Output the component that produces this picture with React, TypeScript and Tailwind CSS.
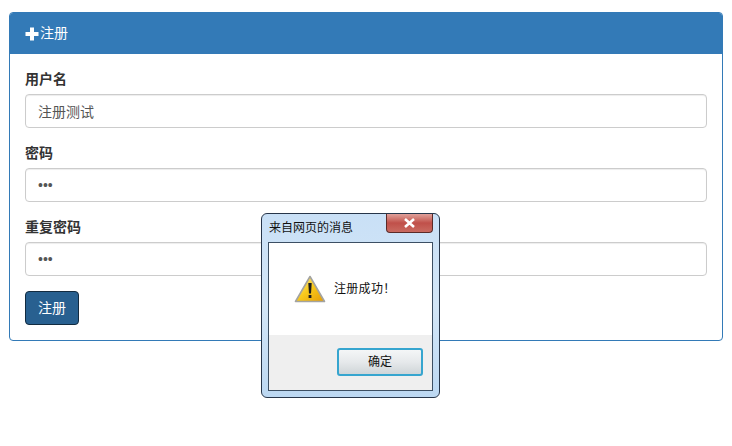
const font = "[font-family:'Liberation_Sans','Noto_Sans_CJK_SC',sans-serif]"

const fields = [
  { label: '用户名', value: '注册测试', type: 'text' },
  { label: '密码', value: '123', type: 'password' },
  { label: '重复密码', value: '123', type: 'password' },
]

function WarningIcon() {
  return (
    <svg width="32" height="28" viewBox="0 0 32 28">
      <defs>
        <linearGradient id="warn" x1="0" y1="0" x2="1" y2="1">
          <stop offset="0" stopColor="#fff2a0" />
          <stop offset="0.5" stopColor="#f8c91c" />
          <stop offset="1" stopColor="#e59b05" />
        </linearGradient>
      </defs>
      <path d="M16 1.5 L30.5 26.5 L1.5 26.5 Z" fill="url(#warn)" stroke="#a3a3a0" strokeWidth="1.6" strokeLinejoin="round" />
      <path d="M14.3 8 L17.7 8 L17 18.5 L15 18.5 Z" fill="#1c1c1c" />
      <rect x="14.6" y="20" width="2.8" height="3" fill="#1c1c1c" />
    </svg>
  )
}

function MessageBox() {
  return (
    <div className="absolute left-[261px] top-[213px] flex h-[185px] w-[179px] flex-col rounded-[6px] border border-[#27364a] bg-gradient-to-b from-[#c9e0f6] via-[#d3e6f7] to-[#bcd8f2] px-[6px] pb-[6px]">
      <div className="flex h-[28px] shrink-0 items-start justify-between">
        <span className="pt-[5px] pl-[1px] text-[12px] leading-[18px] text-[#111]">来自网页的消息</span>
        <div className="mr-[0px] flex h-[19px] w-[47px] items-center justify-center rounded-b-[4px] border border-t-0 border-[#5a2a28] bg-gradient-to-b from-[#dfa09a] via-[#c0504a] to-[#c96a60]">
          <svg width="13" height="10" viewBox="0 0 13 10">
            <path d="M2 1 L11 9 M11 1 L2 9" stroke="#fff" strokeWidth="2.6" />
          </svg>
        </div>
      </div>
      <div className="flex flex-1 flex-col border border-[#3c4f63] bg-white">
        <div className="flex h-[92px] items-center pb-[1px] pl-[25px]">
          <WarningIcon />
          <span className="ml-[8px] text-[12px] tracking-[0.3px] text-[#111]">注册成功！</span>
        </div>
        <div className="flex flex-1 items-start justify-end bg-[#efefef] pt-[13px] pr-[9px]">
          <button className="h-[28px] w-[86px] rounded-[3px] border-2 border-[#36a5cf] bg-gradient-to-b from-[#f4f6f7] via-[#e6e9eb] to-[#cfd5d8] text-[12px] text-[#111]">
            确定
          </button>
        </div>
      </div>
    </div>
  )
}

export default function App() {
  return (
    <div className={`relative h-[446px] w-[732px] overflow-hidden bg-white pt-[12px] pl-[9px] ${font}`}>
      <div className="w-[714px] rounded-[4px] border border-[#337ab7] bg-white">
        <div className="flex h-[41px] items-center rounded-t-[3px] bg-[#337ab7] px-[15px] text-[14px] text-white">
          <svg width="14" height="14" viewBox="0 0 14 14" className="mr-[1px]">
            <path d="M5 0.5 H9 V5 H13.5 V9 H9 V13.5 H5 V9 H0.5 V5 H5 Z" fill="#fff" />
          </svg>
          注册
        </div>
        <div className="p-[15px]">
          {fields.map(field => (
            <div key={field.label} className="mb-[15px]">
              <label className="mb-[5px] block text-[14px] leading-[20px] font-bold text-[#333]">{field.label}</label>
              <input
                type={field.type}
                defaultValue={field.value}
                className="block h-[34px] w-full rounded-[4px] border border-[#ccc] bg-white px-[12px] text-[14px] text-[#555] shadow-[inset_0_1px_1px_rgba(0,0,0,0.075)] outline-none"
              />
            </div>
          ))}
          <button className="block h-[34px] w-[54px] rounded-[4px] border border-[#122b40] bg-[#286090] text-[14px] text-white">
            注册
          </button>
        </div>
      </div>
      <MessageBox />
    </div>
  )
}
